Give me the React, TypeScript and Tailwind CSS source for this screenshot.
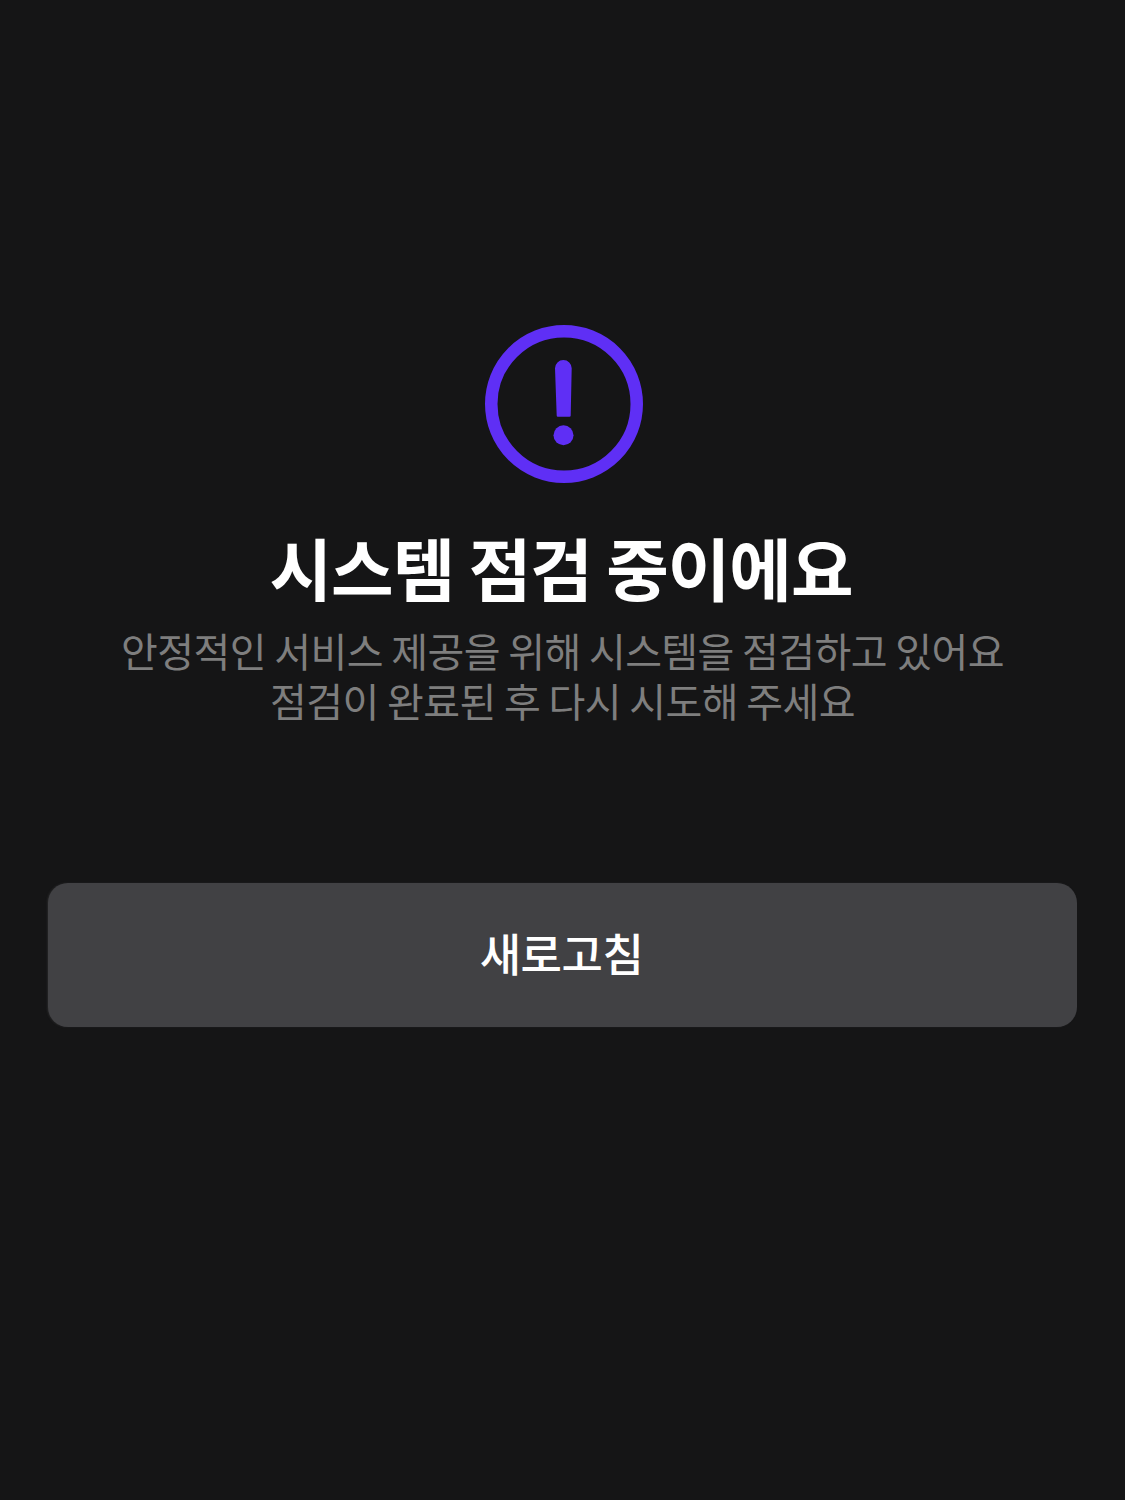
export default function App() {
  return (
    <div className="min-h-[1500px] bg-[#151516] flex flex-col items-center pt-[325px] font-['Noto_Sans_CJK_KR','Liberation_Sans',sans-serif]">
      <svg className="ml-[2px]" width="158" height="158" viewBox="0 0 158 158" fill="none">
        <circle cx="79" cy="79" r="72.75" stroke="#5f2ff5" strokeWidth="12.5" />
        <path d="M70 43.3a8.35 8.35 0 0 1 16.7 0L85.7 90.5a1.2 1.2 0 0 1-1.2 1.2H72.9a1.2 1.2 0 0 1-1.2-1.2Z" fill="#5f2ff5" />
        <circle cx="78.5" cy="110.3" r="10" fill="#5f2ff5" />
      </svg>
      <h1 className="mt-[41px] mr-[3px] text-[68px] leading-[86px] font-bold text-white tracking-[-1px]">시스템 점검 중이에요</h1>
      <p className="mt-[15px] text-center text-[40px] leading-[50px] text-[#7e7e7e] tracking-[-0.6px]">
        안정적인 서비스 제공을 위해 시스템을 점검하고 있어요
        <br />
        점검이 완료된 후 다시 시도해 주세요
      </p>
      <button className="mt-[158px] ml-[-1px] w-[1029px] h-[144px] pb-[4px] pr-[1px] rounded-[20px] bg-[#414144] shadow-[-1px_0_2px_#41414466] text-white text-[45px] font-medium tracking-[-0.5px]">
        새로고침
      </button>
    </div>
  );
}
